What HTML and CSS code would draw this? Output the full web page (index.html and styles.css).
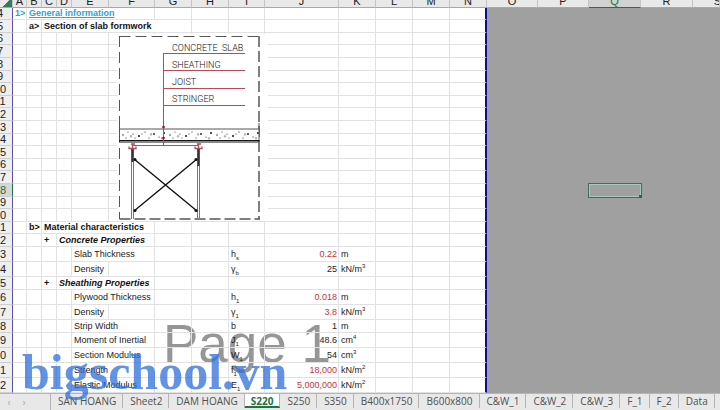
FILE: index.html
```html
<!DOCTYPE html>
<html lang="en">
<head>
<meta charset="utf-8">
<title>Formwork S220</title>
<link rel="stylesheet" href="styles.css">
</head>
<body>
<main class="sheet">
  <div class="page-mark">Page 1</div>
  <table class="grid">
    <colgroup>
      <col class="w-head"><col class="w-a"><col class="w-s"><col class="w-s"><col class="w-s">
      <col class="w-m"><col class="w-f"><col class="w-m"><col class="w-m"><col class="w-i">
      <col class="w-j"><col class="w-m"><col class="w-m"><col class="w-m"><col class="w-m">
      <col class="w-o"><col class="w-o"><col class="w-q"><col class="w-q"><col>
    </colgroup>
    <thead><tr id="letters"></tr></thead>
    <tbody id="rows"></tbody>
  </table>
  <figure class="drawing">
    <svg viewBox="117 34 151 187" role="img" aria-label="Section of slab formwork">
      <defs>
        <pattern id="speckle" patternUnits="userSpaceOnUse" x="120" y="130" width="47" height="10">
          <g fill="#111">
            <circle cx="3" cy="5" r=".7"/><circle cx="8" cy="2" r=".5"/><circle cx="13" cy="4" r=".6"/>
            <circle cx="19" cy="6" r="1"/><circle cx="25" cy="2" r=".6"/><circle cx="29" cy="8" r=".6"/>
            <circle cx="34" cy="4" r=".9"/><circle cx="39" cy="7" r=".6"/><circle cx="44" cy="3" r="1"/>
            <circle cx="6" cy="8" r=".6"/><circle cx="15" cy="8" r=".5"/><circle cx="22" cy="4" r=".5"/>
          </g>
          <path d="M10 7l1-2 1 2zM30 5l1-2 1 2zM41 9l1-2 1 2z" fill="none" stroke="#777" stroke-width=".5"/>
        </pattern>
      </defs>
      <g fill="none" stroke="#555">
        <path d="M119.500 36.500H260" stroke-dasharray="11 5"/>
        <path d="M119.500 36V219" stroke-dasharray="11 5"/>
        <path d="M259 36V219" stroke-width="1.500" stroke-dasharray="11 4"/>
        <path d="M119.500 219H260" stroke-width="1.400" stroke-dasharray="11 4"/>
      </g>
      <rect x="119.500" y="129" width="139.500" height="12" fill="#fff"/>
      <rect x="119.500" y="129.500" width="139.500" height="11" fill="url(#speckle)"/>
      <path d="M119 129H259.500M119.500 123V142M259 123V142" stroke="#555" fill="none"/>
      <path d="M119 140.700H259.500" stroke="#111" stroke-width="1.500"/>
      <path d="M119 142.500H259.500" stroke="#888"/>
      <g stroke="#777" fill="none">
        <path d="M131.500 149V219M133.500 149V219M197.500 149V219M199.500 149V219"/>
        <path d="M132.500 149V162M198.500 149V166" stroke="#333" stroke-width="2"/>
      </g>
      <path d="M134 159L197 211M197 159L134 211" stroke="#111" stroke-width="1.400"/>
      <g fill="#111"><circle cx="135" cy="159.500" r="1.500"/><circle cx="196" cy="159.500" r="1.500"/><circle cx="135" cy="210.500" r="1.500"/><circle cx="196" cy="210.500" r="1.500"/></g>
      <g stroke="#b84a55" fill="none">
        <path d="M163.500 53.500V145.500M163 53.500H245M163 70.500H245M163 88.500H245M163 105.500H245"/>
        <path d="M132 145.500H199" stroke="#d0404c"/>
        <path d="M129 146.500V148.500H136V146.500M195 146.500V148.500H202V146.500M131 144H135M197 144H201M132.500 144V148M198.500 144V148" stroke-width="1.300"/>
      </g>
      <g fill="#b00020"><circle cx="163.500" cy="127" r="1.300"/><circle cx="163.500" cy="138" r="1.300"/></g>
      <g class="cad">
        <text x="172" y="51">CONCRETE&#160; SLAB</text>
        <text x="172" y="68">SHEATHING</text>
        <text x="172" y="85">JOIST</text>
        <text x="172" y="102">STRINGER</text>
      </g>
    </svg>
  </figure>
</main>
<nav class="tabs" aria-label="Sheets">
  <div class="arrows"><button type="button" aria-label="Previous sheet">‹</button><button type="button" aria-label="Next sheet">›</button></div>
  <a href="#">SAN HOANG</a><a href="#">Sheet2</a><a href="#">DAM HOANG</a><a href="#" class="active">S220</a><a href="#">S250</a><a href="#">S350</a><a href="#">B400x1750</a><a href="#">B600x800</a><a href="#">C&amp;W_1</a><a href="#">C&amp;W_2</a><a href="#">C&amp;W_3</a><a href="#">F_1</a><a href="#">F_2</a><a href="#">Data</a>
</nav>
<div class="brand">bigschool.vn</div>
<script src="sheet.js"></script>
</body>
</html>
```
FILE: sheet.js
```js
const letters = "ABCDEFGHIJKLMNOPQRS".split("");
const prop = (label, symbol, value, unit, input, span = 2) => ({
  E: [label, "", span], I: [symbol], J: [value, input ? "num input" : "num"], K: [unit]
});
const data = {
  4: { A: ["1&gt;", "title"], B: ["<u>General information</u>", "title", 5] },
  5: { B: ["a&gt;", "bold"], C: ["Section of slab formwork", "bold", 5] },
  21: { B: ["b&gt;", "bold"], C: ["Material characteristics", "bold", 4] },
  22: { C: ["+", "bold"], D: ["Concrete Properties", "bold italic", 3] },
  23: prop("Slab Thickness", "h<sub>s</sub>", "0.22", "m", true),
  24: prop("Density", "γ<sub>b</sub>", "25", "kN/m<sup>3</sup>", false, 1),
  25: { C: ["+", "bold"], D: ["Sheathing Properties", "bold italic", 3] },
  26: prop("Plywood Thickness", "h<sub>1</sub>", "0.018", "m", true),
  27: prop("Density", "γ<sub>1</sub>", "3.8", "kN/m<sup>3</sup>", true, 1),
  28: prop("Strip Width", "b", "1", "m", false),
  29: prop("Moment of Inertial", "J<sub>1</sub>", "48.6", "cm<sup>4</sup>", false),
  30: prop("Section Modulus", "W<sub>1</sub>", "54", "cm<sup>3</sup>", false),
  31: prop("Strength", "f<sub>1</sub>", "18,000", "kN/m<sup>2</sup>", true),
  32: prop("Elastic Modulus", "E<sub>1</sub>", "5,000,000", "kN/m<sup>2</sup>", true)
};
const tall = [23, 24, 26, 27, 29, 30, 31, 32];

document.getElementById("letters").innerHTML = '<th class="corner"></th>' +
  letters.map(l => `<th class="col-${l}"><div>${l}</div></th>`).join("");

let html = "";
for (let r = 4; r <= 32; r++) {
  const kind = tall.includes(r) ? "tall" : r < 23 && [0, 2].includes((r - 4) % 5) ? "short" : "";
  html += `<tr class="${kind}"><th class="${r === 18 ? "current" : ""}"><div>${r}</div></th>`;
  for (let c = 0; c < letters.length;) {
    const [text = "", style = "", span = 1] = (data[r] || {})[letters[c]] || [];
    const zone = c > 13 ? "outside" : c === 13 ? "edge" : "";
    const picked = r === 18 && letters[c] === "Q" ? "picked" : "";
    html += `<td class="${zone} ${style} ${picked}" colspan="${span}">${text}</td>`;
    c += span;
  }
  html += "</tr>";
}
document.getElementById("rows").innerHTML = html;
```
FILE: styles.css
```css
* { box-sizing: border-box; }

body {
  margin: 0;
  position: relative;
  min-height: 100vh;
  display: flex;
  flex-direction: column;
  overflow: hidden;
  background: #fff;
  font-family: "Liberation Sans", Arial, sans-serif;
  font-size: 9px;
  color: #222;
}

.sheet { position: relative; flex: 1; }

.grid {
  position: relative;
  width: 100%;
  table-layout: fixed;
  border-collapse: separate;
  border-spacing: 0;
  line-height: 11px;
}

.w-head { width: 13px; }
.w-a { width: 14px; }
.w-s { width: 15px; }
.w-m { width: 37px; }
.w-i { width: 36px; }
.w-f { width: 46px; }
.w-j { width: 74px; }
.w-o { width: 51px; }
.w-q { width: 52px; }

.grid th, .grid td {
  height: 13px;
  padding: 0 1px 0 2px;
  overflow: hidden;
  white-space: nowrap;
  text-align: left;
  font-weight: normal;
  border-right: 1px solid #e2e2e5;
  border-bottom: 1px solid #e2e2e5;
}
.grid .short th, .grid .short td { height: 12px; }
.grid .tall th, .grid .tall td { height: 15px; }

.grid thead th {
  height: 8px;
  padding: 0;
  background: #e9e9e9;
  border-right-color: #c4c4c4;
  border-bottom-color: #a8a8a8;
  font-size: 11px;
  line-height: 12px;
  text-align: center;
}
thead div {
  height: 7px;
  display: flex;
  align-items: flex-end;
  justify-content: center;
}
.grid .corner { background: linear-gradient(135deg, #e9e9e9 50%, #2f7d5b 50%); }
.grid .col-Q { background: #d2d2d2; color: #217346; border-bottom-color: #217346; }
.grid .col-S div { justify-content: flex-end; margin-right: -2px; }

.grid tbody th {
  padding: 0;
  background: #efefef;
  border-right-color: #5a55a8;
  border-bottom-color: #cfcfcf;
  font-size: 11px;
  text-align: center;
}
.grid tbody th div { margin-left: -20px; margin-right: -8px; }
.grid tbody .current { background: #d6d6d6; color: #217346; border-right-color: #217346; }

.grid .edge { border-right: 2px solid #0c0c94; }
.grid .outside { background: #a0a0a0; border-color: #a0a0a0; }
.grid .picked { position: relative; overflow: visible; }
.picked::before {
  content: "";
  position: absolute;
  inset: -1px -2px -2px -1px;
  border: 1px solid #3c6e58;
  box-shadow: inset 0 0 0 1px #a9c9b8;
}
.picked::after {
  content: "";
  position: absolute;
  right: -2px;
  bottom: -2px;
  width: 3px;
  height: 3px;
  background: #2c6349;
}

.grid .bold { font-weight: bold; color: #111; }
.grid .title { font-weight: bold; color: #2fa3d0; }
.italic { font-style: italic; }
.grid .num { text-align: right; }
.input { color: #c8323c; }
sub, sup { font-size: 6px; line-height: 0; }

.drawing {
  position: absolute;
  left: 117px;
  top: 34px;
  width: 151px;
  height: 187px;
  margin: 0;
  background: #fff;
}
.drawing svg { display: block; }
.cad text {
  font-family: Roboto, "Liberation Sans", sans-serif;
  font-weight: 300;
  font-size: 9px;
  fill: #111;
}

.page-mark {
  position: absolute;
  left: 163px;
  top: 314px;
  font-size: 53px;
  line-height: 60px;
  color: #969696;
}

.tabs {
  display: flex;
  height: 17px;
  background: #e8e8e8;
  border-top: 1px solid #b5b5b5;
  font-family: "Open Sans", "Noto Sans", sans-serif;
  font-size: 10px;
  line-height: 14px;
  white-space: nowrap;
}
.arrows {
  flex: none;
  width: 51px;
  display: flex;
  gap: 9px;
  padding-left: 6px;
  border-right: 1px solid #b5b5b5;
}
.arrows button {
  width: 6px;
  padding: 0;
  border: 0;
  background: none;
  color: #aaa;
  font: inherit;
}
.tabs a {
  flex: none;
  height: 14px;
  padding: 0 6px 0 7px;
  color: #505050;
  text-decoration: none;
  border-right: 1px solid #b5b5b5;
}
.tabs .active {
  padding: 0 6px;
  background: #fff;
  color: #217346;
  font-weight: bold;
  border-bottom: 2px solid #217346;
}

.brand {
  position: absolute;
  left: 22px;
  top: 344px;
  font-family: "Liberation Serif", "Times New Roman", serif;
  font-size: 50px;
  font-weight: bold;
  line-height: 56px;
  color: #2f6fdc;
  opacity: .75;
  pointer-events: none;
}
```
